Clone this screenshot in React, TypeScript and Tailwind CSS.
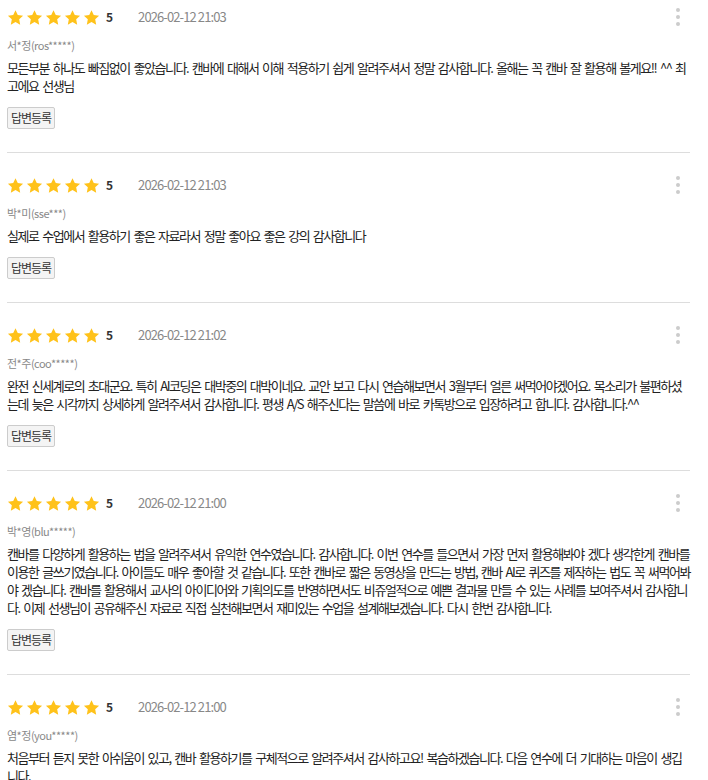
import React from 'react';

type Review = {
  name: string;
  date: string;
  text: string;
};

const reviews: Review[] = [
  {
    name: '서*정(ros*****)',
    date: '2026-02-12 21:03',
    text: '모든부분 하나도 빠짐없이 좋았습니다. 캔바에 대해서 이해 적용하기 쉽게 알려주셔서 정말 감사합니다. 올해는 꼭 캔바 잘 활용해 볼게요!! ^^ 최고에요 선생님',
  },
  {
    name: '박*미(sse***)',
    date: '2026-02-12 21:03',
    text: '실제로 수업에서 활용하기 좋은 자료라서 정말 좋아요 좋은 강의 감사합니다',
  },
  {
    name: '전*주(coo*****)',
    date: '2026-02-12 21:02',
    text: '완전 신세계로의 초대군요. 특히 AI코딩은 대박중의 대박이네요. 교안 보고 다시 연습해보면서 3월부터 얼른 써먹어야겠어요. 목소리가 불편하셨는데 늦은 시각까지 상세하게 알려주셔서 감사합니다. 평생 A/S 해주신다는 말씀에 바로 카톡방으로 입장하려고 합니다. 감사합니다.^^',
  },
  {
    name: '박*영(blu*****)',
    date: '2026-02-12 21:00',
    text: '캔바를 다양하게 활용하는 법을 알려주셔서 유익한 연수였습니다. 감사합니다. 이번 연수를 들으면서 가장 먼저 활용해봐야 겠다 생각한게 캔바를 이용한 글쓰기였습니다. 아이들도 매우 좋아할 것 같습니다. 또한 캔바로 짧은 동영상을 만드는 방법, 캔바 AI로 퀴즈를 제작하는 법도 꼭 써먹어봐야 겠습니다. 캔바를 활용해서 교사의 아이디어와 기획의도를 반영하면서도 비쥬얼적으로 예쁜 결과물 만들 수 있는 사례를 보여주셔서 감사합니다. 이제 선생님이 공유해주신 자료로 직접 실천해보면서 재미있는 수업을 설계해보겠습니다. 다시 한번 감사합니다.',
  },
  {
    name: '염*정(you*****)',
    date: '2026-02-12 21:00',
    text: '처음부터 듣지 못한 아쉬움이 있고, 캔바 활용하기를 구체적으로 알려주셔서 감사하고요! 복습하겠습니다. 다음 연수에 더 기대하는 마음이 생깁니다.',
  },
];

function Star() {
  return (
    <svg viewBox="0 0 24 24" className="w-[17px] h-[17px]" fill="#FFC21A">
      <path d="M12 1.6l3.2 6.9 7.5.9-5.5 5.2 1.4 7.5L12 18.4l-6.6 3.7 1.4-7.5L1.3 9.4l7.5-.9z" />
    </svg>
  );
}

function ReviewItem({ review, first }: { review: Review; first: boolean }) {
  return (
    <div className={`border-b border-[#dddddd] pb-[23px] ${first ? 'pt-[9px]' : 'pt-6'}`}>
      <div className="flex items-center h-4">
        <div className="flex items-center gap-[2px]">
          <Star />
          <Star />
          <Star />
          <Star />
          <Star />
        </div>
        <span className="ml-[6px] text-[12px] font-bold text-[#333]">5</span>
        <span className="ml-[25px] text-[13px] text-[#888] tracking-[-0.9px]">{review.date}</span>
        <div className="ml-auto mr-[10px] flex flex-col gap-[3px]">
          <span className="w-1 h-1 rounded-full bg-[#cccccc]" />
          <span className="w-1 h-1 rounded-full bg-[#cccccc]" />
          <span className="w-1 h-1 rounded-full bg-[#cccccc]" />
        </div>
      </div>
      <div className="mt-3 text-[11px] leading-4 text-[#888] tracking-[-0.5px]">{review.name}</div>
      <p className="mt-[6px] text-[13px] leading-[18px] text-[#222] tracking-[-1.45px] [word-spacing:2.15px]">
        {review.text}
      </p>
      <button className="mt-3 h-[22px] px-[3px] border border-[#cccccc] bg-[#f4f4f4] rounded-[2px] text-[12px] text-[#333] tracking-[-1px]">
        답변등록
      </button>
    </div>
  );
}

export default function App() {
  return (
    <div className="min-h-screen bg-white pl-[7px] pr-[18px]" style={{ fontFamily: '"Noto Sans CJK KR", "Noto Sans", sans-serif' }}>
      {reviews.map((r, i) => (
        <ReviewItem key={i} review={r} first={i === 0} />
      ))}
    </div>
  );
}
